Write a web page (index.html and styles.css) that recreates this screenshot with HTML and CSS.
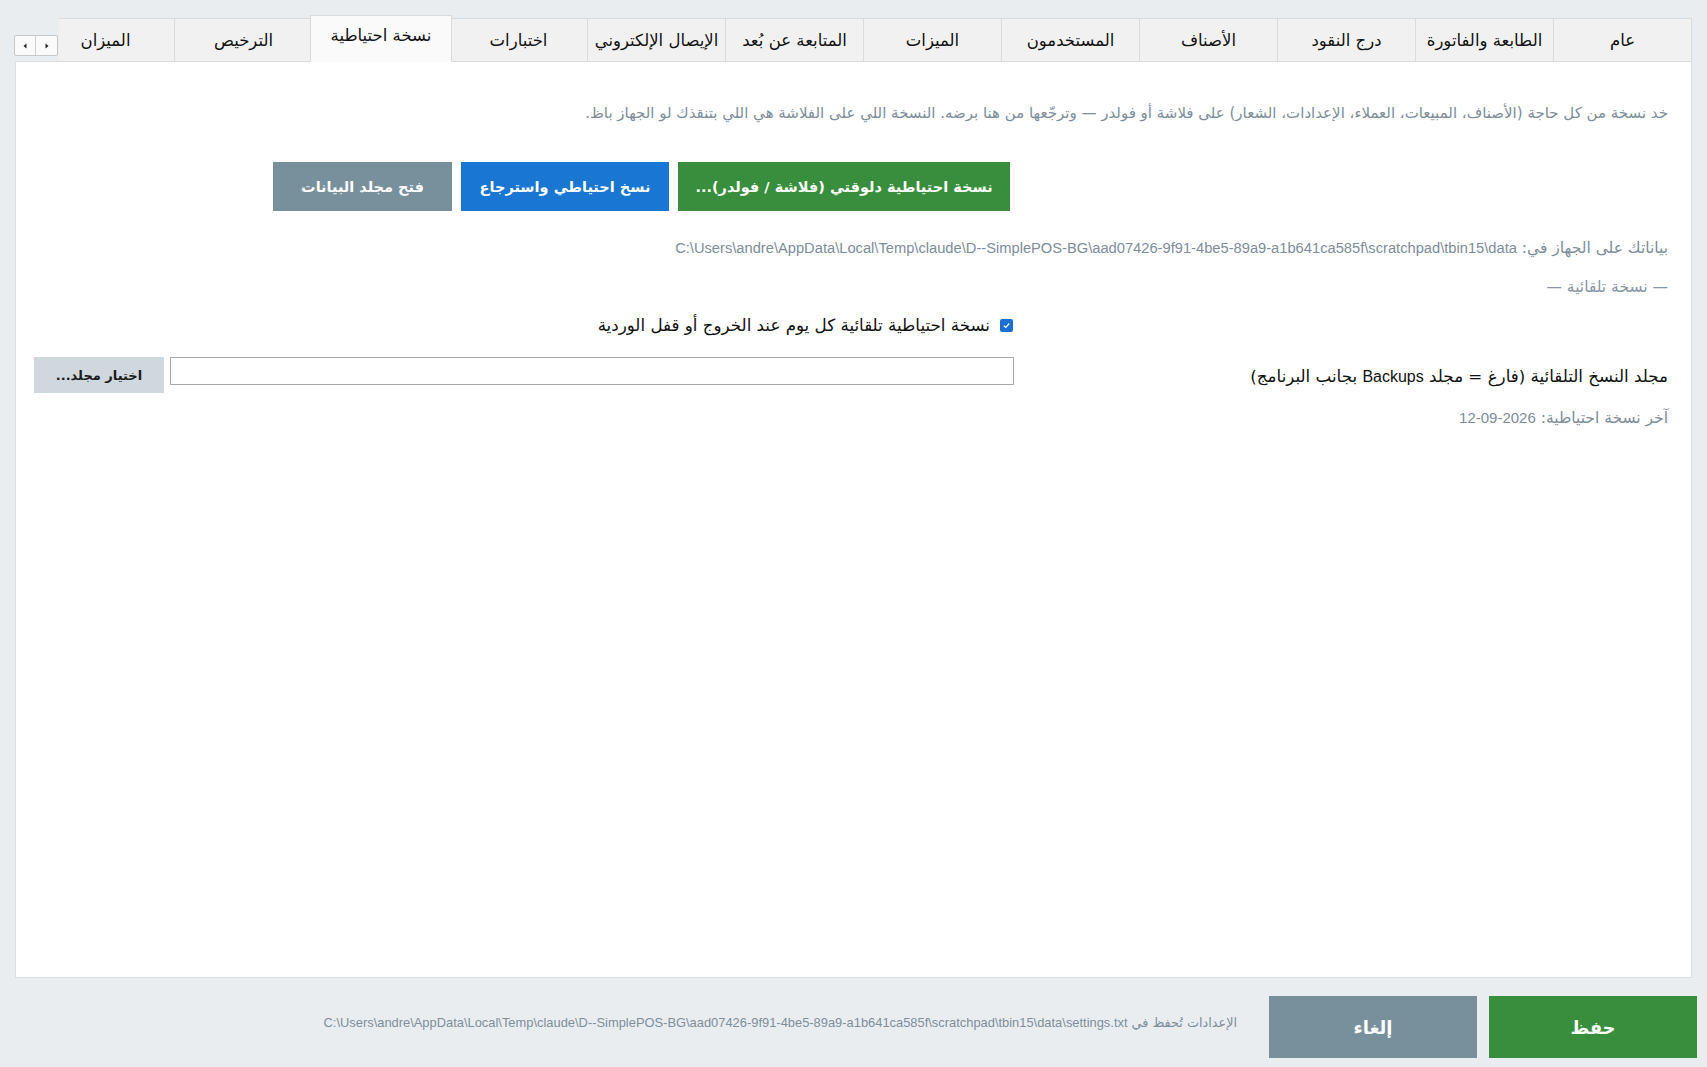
FILE: index.html
```html
<!DOCTYPE html>
<html lang="ar" dir="rtl">
<head>
<meta charset="utf-8">
<title>الإعدادات</title>
<link rel="stylesheet" href="styles.css">
</head>
<body>
<div class="tabstrip">
  <div class="tabs-viewport">
    <div class="tabs">
      <div class="tab">عام</div>
      <div class="tab">الطابعة والفاتورة</div>
      <div class="tab">درج النقود</div>
      <div class="tab">الأصناف</div>
      <div class="tab">المستخدمون</div>
      <div class="tab">الميزات</div>
      <div class="tab">المتابعة عن بُعد</div>
      <div class="tab">الإيصال الإلكتروني</div>
      <div class="tab">اختبارات</div>
      <div class="tab tab-active">نسخة احتياطية</div>
      <div class="tab">الترخيص</div>
      <div class="tab">الميزان</div>
    </div>
  </div>
  <div class="scroller">
    <span class="scroll-btn"><svg width="6" height="6" viewBox="0 0 6 6"><path d="M1.5 0.5 L4.5 3 L1.5 5.5 Z" fill="#222"/></svg></span>
    <span class="scroll-btn"><svg width="6" height="6" viewBox="0 0 6 6"><path d="M4.5 0.5 L1.5 3 L4.5 5.5 Z" fill="#222"/></svg></span>
  </div>
</div>

<main class="panel">
  <p class="desc">خد نسخة من كل حاجة (الأصناف، المبيعات، العملاء، الإعدادات، الشعار) على فلاشة أو فولدر — وترجّعها من هنا برضه. النسخة اللي على الفلاشة هي اللي بتنقذك لو الجهاز باظ.</p>

  <div class="row field-row">
    <div class="actions">
      <button class="btn btn-green">نسخة احتياطية دلوقتي (فلاشة / فولدر)...</button>
      <button class="btn btn-blue">نسخ احتياطي واسترجاع</button>
      <button class="btn btn-gray">فتح مجلد البيانات</button>
    </div>
  </div>

  <p class="path">بياناتك على الجهاز في: <span class="latin" dir="ltr">C:\Users\andre\AppData\Local\Temp\claude\D--SimplePOS-BG\aad07426-9f91-4be5-89a9-a1b641ca585f\scratchpad\tbin15\data</span></p>

  <p class="section">— نسخة تلقائية —</p>

  <div class="row field-row">
    <label class="check">
      <span class="box"><svg width="9" height="9" viewBox="0 0 9 9"><path d="M1.8 4.7 L3.7 6.5 L7.3 2.5" fill="none" stroke="#fff" stroke-width="1.2"/></svg></span>
      <span class="check-text">نسخة احتياطية تلقائية كل يوم عند الخروج أو قفل الوردية</span>
    </label>
  </div>

  <div class="row folder-row">
    <div class="folder-label">مجلد النسخ التلقائية (فارغ = مجلد <span class="latin-label">Backups</span> بجانب البرنامج)</div>
    <div class="folder-field">
      <input class="text-input" type="text" value="">
      <button class="btn-pick">اختيار مجلد...</button>
    </div>
  </div>

  <p class="last">آخر نسخة احتياطية: <span class="latin-date" dir="ltr">12-09-2026</span></p>
</main>

<footer class="footer">
  <button class="big-btn big-save">حفظ</button>
  <button class="big-btn big-cancel">إلغاء</button>
  <p class="settings-path">الإعدادات تُحفظ في <span class="latin-small" dir="ltr">C:\Users\andre\AppData\Local\Temp\claude\D--SimplePOS-BG\aad07426-9f91-4be5-89a9-a1b641ca585f\scratchpad\tbin15\data\settings.txt</span></p>
</footer>
</body>
</html>
```

FILE: styles.css
```css
* { box-sizing: border-box; }

html, body {
  margin: 0;
  padding: 0;
}

body {
  width: 1707px;
  height: 1067px;
  overflow: hidden;
  background: #eaedf0;
  font-family: "DejaVu Sans", "Liberation Sans", sans-serif;
  color: #1a1a1a;
  direction: rtl;
}

p { margin: 0; }

/* ---------- tab strip ---------- */
.tabstrip {
  display: flex;
  align-items: flex-end;
  height: 61px;
  padding-top: 14px;
  margin: 0 15px 0 14px;
}

.tabs-viewport {
  flex: 1;
  height: 47px;
  overflow: hidden;
  position: relative;
  z-index: 2;
  margin-bottom: -1px;
}

.tabs {
  display: flex;
  align-items: flex-end;
  height: 47px;
  padding: 0 2px;
  margin-right: -2px;
}

.tab {
  flex: 0 0 139px;
  height: 44px;
  margin-left: -1px;
  display: flex;
  align-items: center;
  justify-content: center;
  background: #f1f1f1;
  border: 1px solid #dadada;
  font-size: 16.5px;
  color: #111;
  white-space: nowrap;
}

.tab-active {
  flex: 0 0 142px;
  height: 47px;
  margin: 0 -2px 0 -3px;
  background: #fafafa;
  border-bottom-color: #fafafa;
  position: relative;
  z-index: 1;
  padding-bottom: 6px;
}

.scroller {
  display: flex;
  margin-bottom: 5px;
  margin-right: 1px;
  border: 1px solid #c8c8c8;
  border-radius: 2px;
  background: #fafafa;
  height: 21px;
}

.scroll-btn {
  width: 21px;
  height: 19px;
  display: flex;
  align-items: center;
  justify-content: center;
}

.scroll-btn + .scroll-btn {
  border-right: 1px solid #d0d0d0;
}

/* ---------- panel ---------- */
.panel {
  margin: 0 15px;
  height: 917px;
  background: #fff;
  border: 1px solid #dcdfe2;
  padding: 0 23px 0 18px;
  display: flex;
  flex-direction: column;
}

.row {
  display: flex;
}

.field-row {
  padding-right: 654px;
}

.desc {
  margin-top: 41px;
  line-height: 20px;
  font-size: 15px;
  color: #7d8d9b;
  white-space: nowrap;
}

.actions {
  margin-top: 39px;
  display: flex;
  gap: 9px;
  margin-right: 4px;
}

.btn {
  height: 49px;
  border: 0;
  font-family: inherit;
  font-size: 14.5px;
  font-weight: bold;
  color: #fff;
  padding: 0;
}

.btn-green { width: 332px; background: #388e3c; }
.btn-blue  { width: 208px; background: #1976d2; }
.btn-gray  { width: 179px; background: #78909c; }

.path {
  margin-top: 27px;
  line-height: 20px;
  font-size: 15.5px;
  color: #7d8d9b;
  white-space: nowrap;
}

.latin {
  font-family: "Liberation Sans", "DejaVu Sans", sans-serif;
  font-size: 14.7px;
}

.section {
  margin-top: 19px;
  line-height: 20px;
  font-size: 15.5px;
  color: #8696a4;
}

.check {
  margin-top: 18px;
  display: flex;
  align-items: center;
  gap: 10px;
  height: 20px;
  margin-right: 1px;
}

.box {
  width: 13px;
  height: 13px;
  border-radius: 2px;
  background: #1a6fd0;
  display: flex;
  align-items: center;
  justify-content: center;
}

.check-text {
  font-size: 16.7px;
  color: #111;
  line-height: 20px;
}

.folder-row {
  margin-top: 22px;
  height: 36px;
}

.folder-label {
  width: 654px;
  padding-top: 9px;
  line-height: 20px;
  font-size: 16.7px;
  color: #111;
  white-space: nowrap;
}

.latin-label {
  font-family: "Liberation Sans", "DejaVu Sans", sans-serif;
  font-size: 16px;
}

.folder-field {
  flex: 1;
  display: flex;
  gap: 6px;
  align-items: flex-start;
}

.text-input {
  flex: 1;
  height: 28px;
  border: 1px solid #a8a8a8;
  background: #fff;
  margin: 0;
}

.btn-pick {
  width: 130px;
  height: 36px;
  border: 0;
  background: #cfd8dc;
  font-family: inherit;
  font-size: 13px;
  font-weight: bold;
  color: #1a1a1a;
  padding: 0;
}

.last {
  margin-top: 15px;
  line-height: 20px;
  font-size: 15.5px;
  color: #7d8d9b;
}

.latin-date {
  font-family: "Liberation Sans", "DejaVu Sans", sans-serif;
  font-size: 15px;
}

/* ---------- footer ---------- */
.footer {
  display: flex;
  align-items: center;
  gap: 12px;
  padding: 18px 10px 0 0;
}

.big-btn {
  width: 208px;
  height: 62px;
  border: 0;
  font-family: inherit;
  font-size: 18px;
  font-weight: bold;
  color: #fff;
  padding: 0;
}

.big-save { background: #388e3c; }
.big-cancel { background: #78909c; }

.settings-path {
  margin-right: 20px;
  margin-bottom: 10px;
  font-size: 12.8px;
  color: #7d8d9b;
  white-space: nowrap;
}

.latin-small {
  font-family: "Liberation Sans", "DejaVu Sans", sans-serif;
  font-size: 12.9px;
}
```
